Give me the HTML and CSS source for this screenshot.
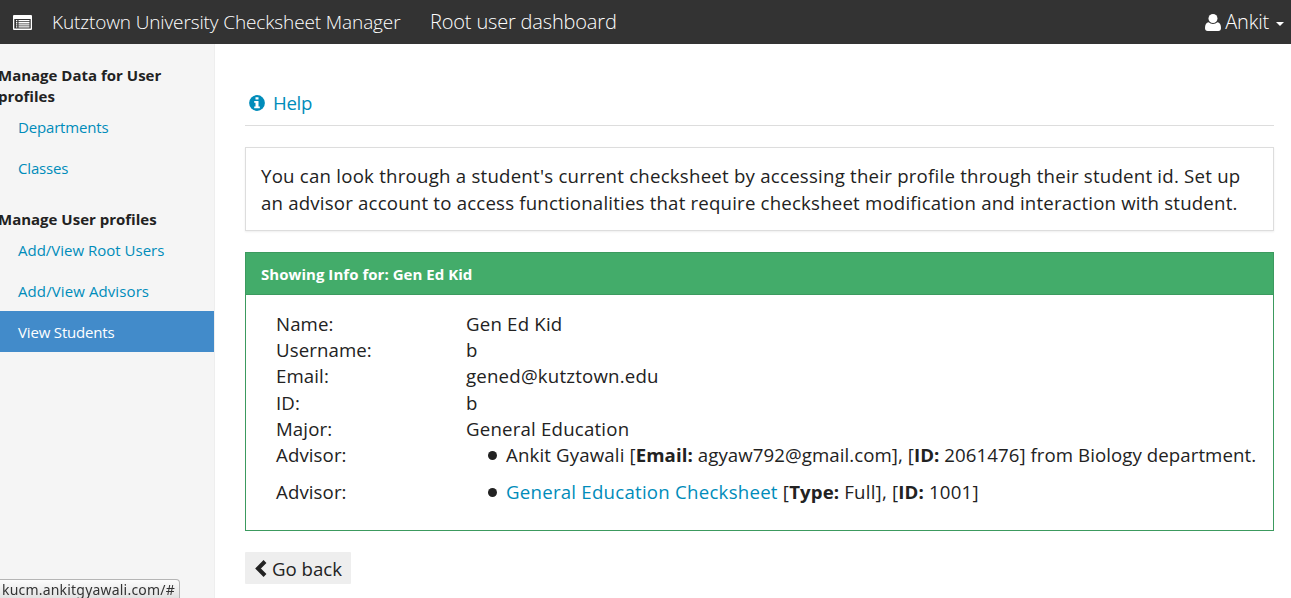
FILE: index.html
```html
<!DOCTYPE html>
<html lang="en">
<head>
<meta charset="utf-8">
<title>Kutztown University Checksheet Manager</title>
<link rel="stylesheet" href="styles.css">
</head>
<body>
<header class="navbar">
  <svg class="brand-icon" width="19" height="15" viewBox="0 0 19 15"><path fill="#fff" fill-rule="evenodd" d="M1 0h17a1 1 0 0 1 1 1v13a1 1 0 0 1-1 1H1a1 1 0 0 1-1-1V1a1 1 0 0 1 1-1zM1.3 4v9.5h16.4V4z"/><path fill="#fff" d="M3 5h1.3v1.3H3zM3 7.1h1.3v1.3H3zM3 9.2h1.3v1.3H3zM3 11.3h1.3v1.3H3zM5.5 5h11v1.3h-11zM5.5 7.1h11v1.3h-11zM5.5 9.2h11v1.3h-11zM5.5 11.3h11v1.3h-11z"/></svg>
  <span class="brand">Kutztown University Checksheet Manager</span>
  <span class="page-name">Root user dashboard</span>
  <a class="account"><svg width="16" height="17" viewBox="0 0 16 17"><path fill="#fff" d="M3.6 8.2Q0 8.6 0 14q0 3 2.7 3h10.6q2.7 0 2.7-3 0-5.4-3.6-5.8Q10.500 10 8 10T3.600 8.200z"/><circle cx="8" cy="4.500" r="4.500" fill="#fff"/></svg><span class="account-name">Ankit</span><i class="caret"></i></a>
</header>
<div class="layout">
  <nav class="sidebar">
    <h2 class="group">Manage Data for User profiles</h2>
    <a class="item snug">Departments</a>
    <a class="item snug">Classes</a>
    <h2 class="group group-next">Manage User profiles</h2>
    <a class="item">Add/View Root Users</a>
    <a class="item wide">Add/View Advisors</a>
    <a class="item snug active">View Students</a>
  </nav>
  <main class="main">
    <div class="help"><svg width="16" height="16" viewBox="0 0 16 16"><circle cx="8" cy="8" r="7.900" fill="#008cba"/><path fill="#fff" d="M6.500 2.200h3v2.400h-3zM5.200 6h4.300v5.500h1.300v1.800H5.200v-1.800h1.300V7.800H5.200z"/></svg><span>Help</span></div>
    <p class="well">You can look through a student's current checksheet by accessing their profile through their student id. Set up<br><span class="well-end">an advisor account to access functionalities that require checksheet modification and interaction with student.</span></p>
    <section class="panel">
      <h3 class="panel-title">Showing Info for: Gen Ed Kid</h3>
      <dl class="info">
        <dt>Name:</dt><dd>Gen Ed Kid</dd>
        <dt>Username:</dt><dd>b</dd>
        <dt>Email:</dt><dd>gened@kutztown.edu</dd>
        <dt>ID:</dt><dd>b</dd>
        <dt>Major:</dt><dd>General Education</dd>
        <dt>Advisor:</dt><dd class="listed advisor"><i class="bullet"></i><span><span class="advisor-name">Ankit Gyawali [</span><b>Email:</b> agyaw792@gmail.com], [<b>ID:</b> 2061476] from Biology department.</span></dd>
        <dt>Advisor:</dt><dd class="listed sheet"><i class="bullet"></i><span><a class="link">General Education Checksheet</a> [<b>Type:</b> Full], [<b>ID:</b> 1001]</span></dd>
      </dl>
    </section>
    <button class="back"><svg width="13" height="17" viewBox="0 0 13 17"><path d="M11 1.500L4 8.500l7 7" fill="none" stroke="#222" stroke-width="4"/></svg><span>Go back</span></button>
  </main>
</div>
<div class="status">kucm.ankitgyawali.com/#</div>
</body>
</html>
```
FILE: styles.css
```css
* { box-sizing: border-box; }
body { margin: 0; height: 598px; overflow: hidden; background: #fff; color: #222; font-family: "Open Sans", sans-serif; font-size: 18.65px; }
svg { display: block; flex: none; }
.navbar { height: 44px; background: #333; color: #fff; display: flex; align-items: center; padding: 0 7px 0 13px; font-weight: 300; white-space: nowrap; }
.brand { margin-left: 20px; width: 378px; font-size: 19px; letter-spacing: -.12px; }
.page-name { font-size: 20px; letter-spacing: -.17px; padding-bottom: 2px; }
.account { margin-left: auto; display: flex; align-items: center; font-size: 20px; letter-spacing: -.2px; }
.account-name { margin-left: 4px; padding-bottom: 2px; }
.caret { margin: 4px 0 0 7px; border: 4px solid transparent; border-top-color: #fff; border-bottom: 0; }
.layout { display: flex; height: 554px; }
.sidebar { width: 215px; flex: none; background: #f5f5f5; border-right: 1px solid #eee; padding-top: 21px; font-size: 15px; line-height: 21px; }
.group { margin: 0 40px 0 -2px; font-size: 15px; line-height: 21px; font-weight: 700; }
.group-next { margin-top: 20px; }
.item { display: block; height: 41px; padding: 10px 18px; color: #008cba; }
.snug { letter-spacing: -.17px; }
.wide { letter-spacing: .1px; }
.active { margin-top: -1px; padding-top: 11px; background: #428bca; color: #fff; }
.main { flex: 1; padding: 44px 17px 0 30px; white-space: nowrap; }
.help { height: 38px; border-bottom: 1px solid #ddd; display: flex; align-items: center; gap: 8px; padding: 0 4px 7px; color: #008cba; letter-spacing: -.3px; }
.help span { padding-bottom: 2px; }
.well { margin: 21px 0; height: 84px; border: 1px solid #ddd; box-shadow: 0 1px 2px rgba(0,0,0,.07); padding: 14px 15px; line-height: 27px; letter-spacing: .227px; }
.well-end { letter-spacing: .19px; }
.panel { margin: 0; height: 279px; border: 1px solid #3c9a5f; }
.panel-title { margin: 0; height: 42px; padding: 0 15px; line-height: 43px; font-size: 15px; letter-spacing: .04px; color: #fff; background: #43ac6a; border-bottom: 1px solid #3c9a5f; }
.info { margin: 15px 0 0 30px; display: grid; grid-template-columns: 190px 1fr; grid-template-rows: 26px 26px 27px 26px 26px 37px 27px; line-height: 27px; letter-spacing: .2px; }
.info dt, .info dd { margin: 0; }
.info dt { letter-spacing: .1px; }
.listed { display: flex; }
.info .advisor { letter-spacing: .07px; }
.advisor-name { letter-spacing: .14px; }
.info .sheet { letter-spacing: .22px; }
.bullet { width: 9px; height: 9px; border-radius: 50%; background: #222; margin: 10px 9px 0 22px; }
.link { color: #008cba; letter-spacing: .24px; }
.sheet b { letter-spacing: .1px; }
.back { margin-top: 21px; height: 32px; width: 106px; border: 0; padding: 1px 9px 0; background: #eee; border-radius: 1px; color: #222; display: flex; align-items: center; gap: 5px; font: inherit; }
.back span { padding-bottom: 1px; }
.status { position: fixed; left: 0; bottom: 0; width: 180px; height: 19px; border: 1px solid #b5b5b5; border-width: 1px 1px 0 0; border-radius: 0 4px 0 0; background: linear-gradient(#fcfcfc, #e2e2e2); color: #333; padding-left: 2px; font-family: "Noto Sans", sans-serif; font-size: 14px; letter-spacing: .2px; line-height: 20px; white-space: nowrap; }
```
